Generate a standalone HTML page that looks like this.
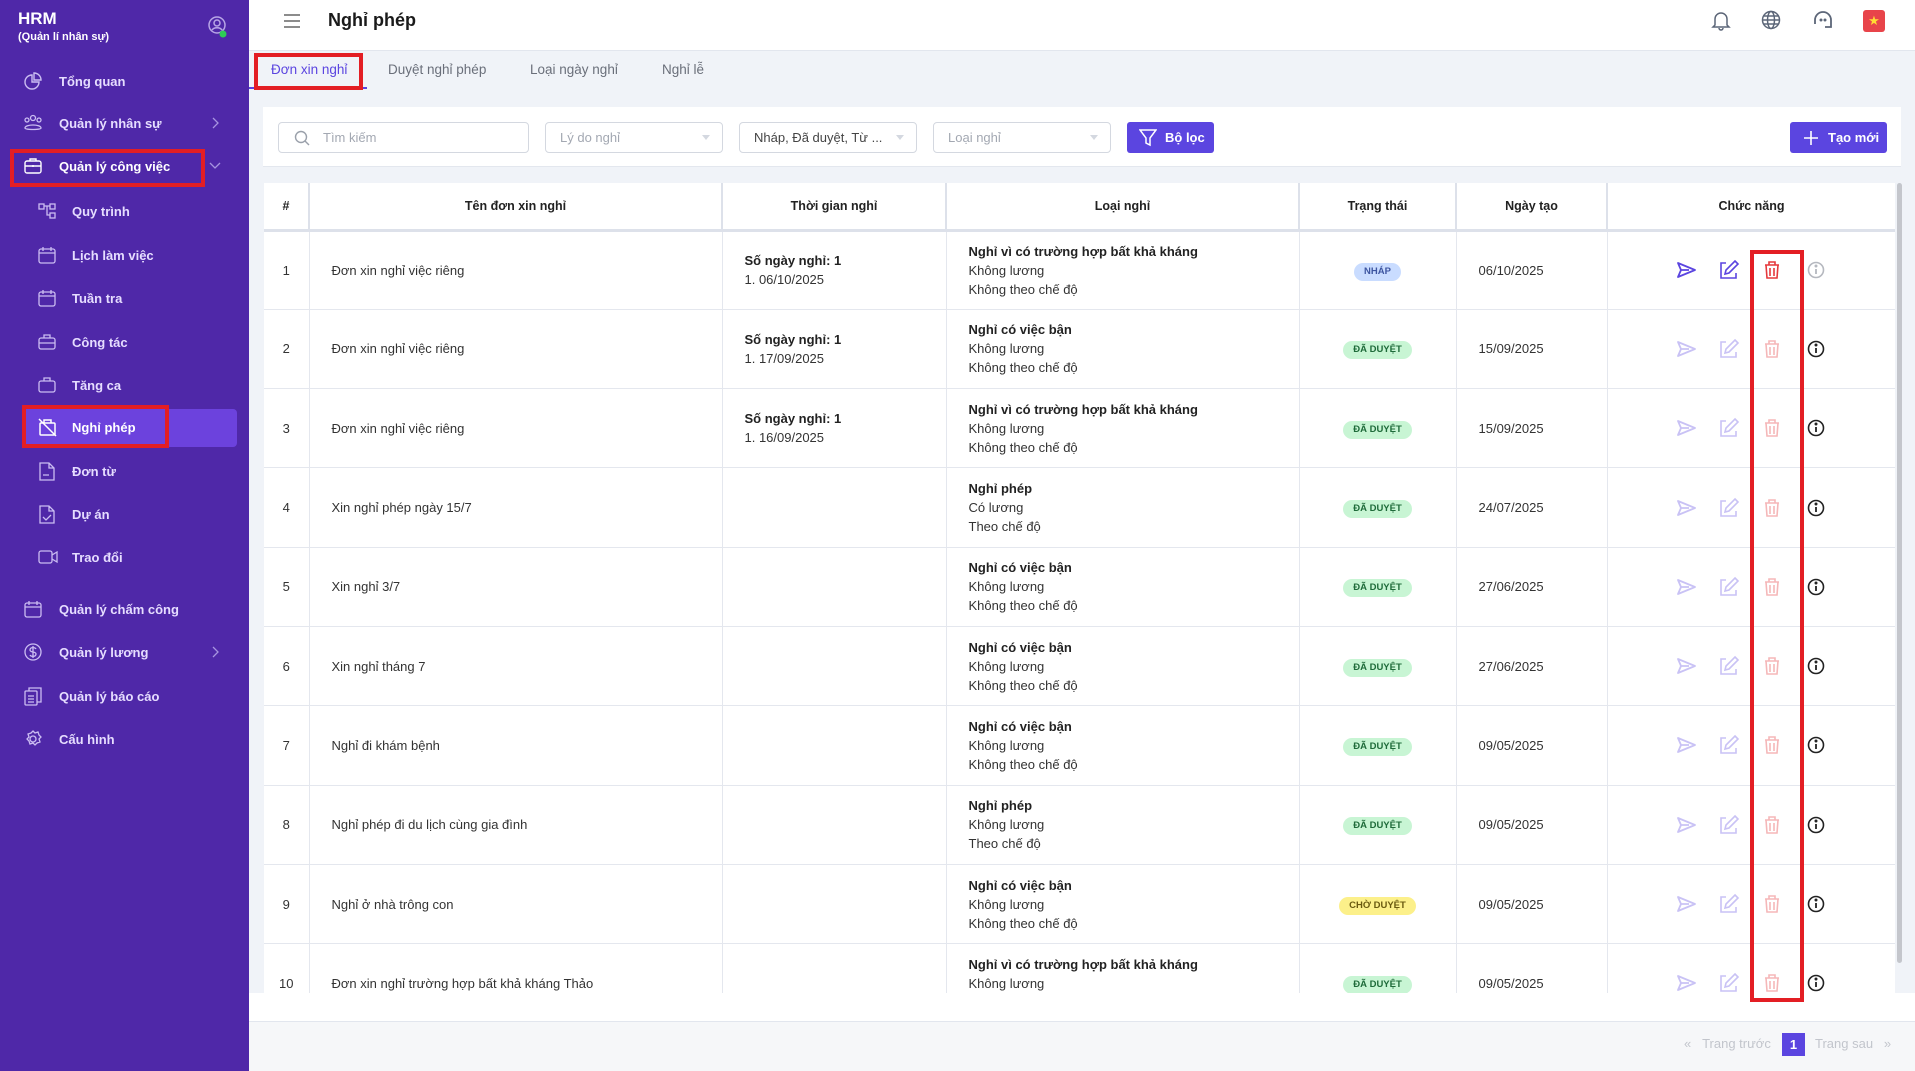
<!DOCTYPE html>
<html><head><meta charset="utf-8">
<style>
*{box-sizing:border-box;margin:0;padding:0}
body{width:1915px;height:1071px;overflow:hidden;font-family:"Liberation Sans","DejaVu Sans",sans-serif;background:#f0f3f8;position:relative;color:#222}
.sb{position:absolute;left:0;top:0;width:249px;height:1071px;background:#4f28a8;color:#fff}
.sb .it{position:absolute;left:0;width:249px;height:36px;display:flex;align-items:center;font-size:13px;font-weight:bold;color:#e6ddff}
.sb .it svg{position:absolute}
.sb .it span{position:absolute}
.top{position:absolute;left:249px;top:0;right:0;height:51px;background:#fff;border-bottom:1px solid #e2e6ee}
.tabs{position:absolute;left:249px;top:51px;right:0;height:40px;background:#f0f3f8}
.tab{position:absolute;top:0;height:38px;line-height:38px;font-size:13.5px;color:#6a6f7a}
.card{position:absolute;left:263px;top:107px;width:1638px;height:60px;background:#fff;border-bottom:1px solid #e3e7ee}
.inp{position:absolute;top:15px;height:31px;border:1px solid #d4d8e0;border-radius:4px;font-size:13px;color:#a3a8b2;line-height:29px;padding-left:14px;background:#fff}
.inp .ar{position:absolute;right:12px;top:12px;width:0;height:0;border-left:4px solid transparent;border-right:4px solid transparent;border-top:5px solid #d4d8e0}
.btn{position:absolute;top:15px;height:31px;background:#5b45e0;border-radius:3px;color:#fff;font-size:13px;font-weight:bold;line-height:31px}
table{position:absolute;left:264px;top:183px;width:1631px;border-collapse:collapse;table-layout:fixed;background:#fff}
th{height:47px;font-size:12.5px;font-weight:bold;color:#222;border-right:2px solid #dde1ea;border-bottom:3px solid #dde1ea;text-align:center}
td{height:79.3px;font-size:13px;color:#333;border-right:1px solid #e4e7ee;border-bottom:1px solid #e4e7ee;vertical-align:middle;line-height:19px}
td.c{text-align:center}
td.p{padding-left:22px}
b{font-weight:bold;color:#222}
.bd{display:inline-block;height:18px;line-height:18px;border-radius:9px;font-size:9.5px;font-weight:bold;padding:0 10px}
.ok{background:#c8f5d4;color:#1f6b3a}
.dr{background:#c9dcff;color:#3d55a0}
.wt{background:#fcf08a;color:#6a5a10}
.acts{position:relative;height:20px}
.acts svg{position:absolute;top:0}
.wrap{position:absolute;left:264px;top:183px;width:1631px;height:810px;overflow:hidden}
.wrap table{position:static}
.foot{position:absolute;left:249px;top:1021px;right:0;height:50px;background:#f6f7f9;border-top:1px solid #e2e6ee}
.red{position:absolute;border:4px solid #e31e24}
</style></head><body>

<div class="sb">
 <div style="position:absolute;left:18px;top:9px;font-size:17px;font-weight:bold">HRM</div>
 <div style="position:absolute;left:18px;top:31px;font-size:11px;font-weight:bold">(Quản lí nhân sự)</div>
 <svg style="position:absolute;left:207px;top:15px" width="22" height="24" viewBox="0 0 22 24"><circle cx="10" cy="10" r="8" fill="none" stroke="#b8a6e6" stroke-width="1.5"/><circle cx="10" cy="8" r="3" fill="none" stroke="#b8a6e6" stroke-width="1.5"/><path d="M5 15c2-3 8-3 10 0" fill="none" stroke="#b8a6e6" stroke-width="1.5"/><circle cx="16" cy="19" r="3.5" fill="#2ecc55"/></svg>

 <div style="position:absolute;left:22px;top:409px;width:215px;height:38px;background:#6c42dd;border-radius:4px"></div>

 <div class="it" style="top:63px"><svg style="left:24px" width="18" height="18" viewBox="0 0 18 18" fill="none" stroke="#cbbdf2" stroke-width="1.4"><path d="M8 3a7 7 0 1 0 7 7H8z"/><path d="M10 1a7 7 0 0 1 7 7h-7z"/></svg><span style="left:59px">Tổng quan</span></div>
 <div class="it" style="top:105px"><svg style="left:23px" width="20" height="18" viewBox="0 0 20 18" fill="none" stroke="#cbbdf2" stroke-width="1.3"><circle cx="10" cy="4" r="2.5"/><circle cx="4" cy="6" r="2"/><circle cx="16" cy="6" r="2"/><path d="M2 14c0-4 16-4 16 0c0 2-16 2-16 0z"/></svg><span style="left:59px">Quản lý nhân sự</span><svg style="left:211px" width="8" height="12" viewBox="0 0 8 12"><path d="M2 1l5 5-5 5" fill="none" stroke="#a794e0" stroke-width="1.3"/></svg></div>
 <div class="it" style="top:148px;color:#fff"><svg style="left:23px" width="20" height="18" viewBox="0 0 20 18" fill="none" stroke="#fff" stroke-width="1.4"><rect x="2" y="4" width="16" height="12" rx="2"/><path d="M7 4V2h6v2M2 9h16M10 8v2"/></svg><span style="left:59px">Quản lý công việc</span><svg style="left:209px" width="12" height="8" viewBox="0 0 12 8"><path d="M1 1l5 5 5-5" fill="none" stroke="#a794e0" stroke-width="1.3"/></svg></div>
 <div class="it" style="top:193px"><svg style="left:38px" width="19" height="18" viewBox="0 0 19 18" fill="none" stroke="#cbbdf2" stroke-width="1.3"><rect x="1" y="2" width="5" height="5"/><rect x="12" y="2" width="5" height="5"/><rect x="12" y="11" width="5" height="5"/><path d="M6 4h6M9 4v9h3"/></svg><span style="left:72px">Quy trình</span></div>
 <div class="it" style="top:237px"><svg style="left:38px" width="18" height="18" viewBox="0 0 18 18" fill="none" stroke="#cbbdf2" stroke-width="1.3"><rect x="1" y="3" width="16" height="14" rx="2"/><path d="M1 7h16M5 1v4M13 1v4"/></svg><span style="left:72px">Lịch làm việc</span></div>
 <div class="it" style="top:280px"><svg style="left:38px" width="18" height="18" viewBox="0 0 18 18" fill="none" stroke="#cbbdf2" stroke-width="1.3"><rect x="1" y="3" width="16" height="14" rx="2"/><path d="M1 7h16M5 1v4M13 1v4"/></svg><span style="left:72px">Tuần tra</span></div>
 <div class="it" style="top:324px"><svg style="left:38px" width="18" height="18" viewBox="0 0 18 18" fill="none" stroke="#cbbdf2" stroke-width="1.3"><rect x="1" y="5" width="16" height="11" rx="2"/><path d="M6 5V2h6v3M1 10h16"/></svg><span style="left:72px">Công tác</span></div>
 <div class="it" style="top:367px"><svg style="left:38px" width="18" height="18" viewBox="0 0 18 18" fill="none" stroke="#cbbdf2" stroke-width="1.3"><rect x="1" y="5" width="16" height="11" rx="2"/><path d="M6 5V2h6v3"/></svg><span style="left:72px">Tăng ca</span></div>
 <div class="it" style="top:409px;color:#fff"><svg style="left:38px" width="19" height="19" viewBox="0 0 19 19" fill="none" stroke="#fff" stroke-width="1.5"><rect x="2" y="5" width="15" height="12" rx="1"/><path d="M6 5V2h7v3M1 1l17 17"/></svg><span style="left:72px">Nghỉ phép</span></div>
 <div class="it" style="top:453px"><svg style="left:39px" width="16" height="19" viewBox="0 0 16 19" fill="none" stroke="#cbbdf2" stroke-width="1.3"><path d="M1 1h9l5 5v12H1z M10 1v5h5M4 13h6"/></svg><span style="left:72px">Đơn từ</span></div>
 <div class="it" style="top:496px"><svg style="left:39px" width="16" height="19" viewBox="0 0 16 19" fill="none" stroke="#cbbdf2" stroke-width="1.3"><path d="M1 1h9l5 5v12H1z M10 1v5h5M4 12l3 3 5-5"/></svg><span style="left:72px">Dự án</span></div>
 <div class="it" style="top:539px"><svg style="left:38px" width="20" height="16" viewBox="0 0 20 16" fill="none" stroke="#cbbdf2" stroke-width="1.3"><rect x="1" y="2" width="13" height="12" rx="2"/><path d="M14 6l5-3v10l-5-3"/></svg><span style="left:72px">Trao đổi</span></div>
 <div class="it" style="top:591px"><svg style="left:24px" width="18" height="18" viewBox="0 0 18 18" fill="none" stroke="#cbbdf2" stroke-width="1.3"><rect x="1" y="3" width="16" height="14" rx="2"/><path d="M1 7h16M5 1v4M13 1v4"/></svg><span style="left:59px">Quản lý chấm công</span></div>
 <div class="it" style="top:634px"><svg style="left:24px" width="18" height="18" viewBox="0 0 18 18" fill="none" stroke="#cbbdf2" stroke-width="1.3"><circle cx="9" cy="9" r="8"/><path d="M12 6c-1-2-6-2-6 1s6 1 6 4-5 3-6 1M9 3v12"/></svg><span style="left:59px">Quản lý lương</span><svg style="left:211px" width="8" height="12" viewBox="0 0 8 12"><path d="M2 1l5 5-5 5" fill="none" stroke="#a794e0" stroke-width="1.3"/></svg></div>
 <div class="it" style="top:678px"><svg style="left:24px" width="18" height="19" viewBox="0 0 18 19" fill="none" stroke="#cbbdf2" stroke-width="1.3"><rect x="1" y="4" width="12" height="14" rx="1"/><path d="M5 4V1h12v14h-4M4 9h6M4 12h6M4 15h6"/></svg><span style="left:59px">Quản lý báo cáo</span></div>
 <div class="it" style="top:721px"><svg style="left:24px" width="18" height="18" viewBox="0 0 18 18" fill="none" stroke="#cbbdf2" stroke-width="1.3"><circle cx="9" cy="9" r="3"/><path d="M9 1l2 2 3-1 1 3 2 2-2 2 1 3-3 1-2 2-2-2-3 1-1-3-2-2 2-2-1-3 3-1z"/></svg><span style="left:59px">Cấu hình</span></div>
</div>
<div class="red" style="left:10px;top:149px;width:195px;height:38px"></div>
<div class="red" style="left:22px;top:405px;width:147px;height:43px"></div>

<div class="top">
 <svg style="position:absolute;left:34px;top:14px" width="18" height="14" viewBox="0 0 18 14"><path d="M1 1h16M1 7h16M1 13h16" stroke="#666" stroke-width="1.5"/></svg>
 <div style="position:absolute;left:79px;top:10px;font-size:18px;font-weight:bold;color:#1a1a1a">Nghỉ phép</div>
 <svg style="position:absolute;left:1462px;top:10px" width="20" height="22" viewBox="0 0 20 22" fill="none" stroke="#5c6678" stroke-width="1.5"><path d="M4 15V9a6 6 0 0 1 12 0v6l2 2H2z"/><path d="M8 18a2 2 0 0 0 4 0"/></svg>
 <svg style="position:absolute;left:1512px;top:10px" width="20" height="20" viewBox="0 0 20 20" fill="none" stroke="#5c6678" stroke-width="1.5"><circle cx="10" cy="10" r="8.5"/><ellipse cx="10" cy="10" rx="3.5" ry="8.5"/><path d="M1.5 10h17M3 6h14M3 14h14"/></svg>
 <svg style="position:absolute;left:1563px;top:10px" width="22" height="20" viewBox="0 0 22 20" fill="none" stroke="#5c6678" stroke-width="1.8"><path d="M3 14V10a8 8 0 0 1 16 0v4"/><path d="M19 14v3h-6"/><circle cx="9" cy="10" r=".6" fill="#5c6678"/><circle cx="13" cy="10" r=".6" fill="#5c6678"/></svg>
 <div style="position:absolute;left:1614px;top:10px;width:22px;height:22px;background:#e8444a;border-radius:3px;color:#ffdd33;font-size:13px;text-align:center;line-height:22px">★</div>
</div>

<div class="tabs">
 <div class="tab" style="left:0;width:118px;border-bottom:2px solid #5b45e0"></div>
 <div class="tab" style="left:22px;color:#5b45e0">Đơn xin nghỉ</div>
 <div class="tab" style="left:139px">Duyệt nghỉ phép</div>
 <div class="tab" style="left:281px">Loại ngày nghỉ</div>
 <div class="tab" style="left:413px">Nghỉ lễ</div>
</div>
<div class="red" style="left:254px;top:53px;width:109px;height:37px"></div>

<div class="card">
 <div class="inp" style="left:15px;width:251px;padding-left:44px">Tìm kiếm<svg style="position:absolute;left:15px;top:7px" width="16" height="16" viewBox="0 0 16 16" fill="none" stroke="#9aa0aa" stroke-width="1.4"><circle cx="7" cy="7" r="5.5"/><path d="M11 11l4 4"/></svg></div>
 <div class="inp" style="left:282px;width:178px">Lý do nghỉ<div class="ar"></div></div>
 <div class="inp" style="left:476px;width:178px;color:#444">Nháp, Đã duyệt, Từ ...<div class="ar"></div></div>
 <div class="inp" style="left:670px;width:178px">Loại nghỉ<div class="ar"></div></div>
 <div class="btn" style="left:864px;width:87px;padding-left:38px">Bộ lọc<svg style="position:absolute;left:12px;top:7px" width="18" height="18" viewBox="0 0 18 18" fill="none" stroke="#fff" stroke-width="1.5"><path d="M1 1h16l-6 8v7l-4-2V9z"/></svg></div>
 <div class="btn" style="left:1527px;width:97px;padding-left:38px">Tạo mới<svg style="position:absolute;left:13px;top:8px" width="16" height="16" viewBox="0 0 16 16" stroke="#fff" stroke-width="1.6"><path d="M8 1v14M1 8h14"/></svg></div>
</div>

<div class="wrap">
<table>
<colgroup><col style="width:45px"><col style="width:413px"><col style="width:224px"><col style="width:353px"><col style="width:157px"><col style="width:151px"><col style="width:288px"></colgroup>
<tr><th>#</th><th>Tên đơn xin nghỉ</th><th>Thời gian nghỉ</th><th>Loại nghỉ</th><th>Trạng thái</th><th>Ngày tạo</th><th style="border-right:none">Chức năng</th></tr>
<!--ROWS-->
<tr><td class="c">1</td><td class="p">Đơn xin nghỉ việc riêng</td><td class="p"><b>Số ngày nghỉ: 1</b><br>1. 06/10/2025</td><td class="p"><b>Nghỉ vì có trường hợp bất khả kháng</b><br>Không lương<br>Không theo chế độ</td><td class="c"><span class="bd dr">NHÁP</span></td><td class="p">06/10/2025</td><td style="border-right:none"><div class="acts" id="a1"></div></td></tr>
<tr><td class="c">2</td><td class="p">Đơn xin nghỉ việc riêng</td><td class="p"><b>Số ngày nghỉ: 1</b><br>1. 17/09/2025</td><td class="p"><b>Nghỉ có việc bận</b><br>Không lương<br>Không theo chế độ</td><td class="c"><span class="bd ok">ĐÃ DUYỆT</span></td><td class="p">15/09/2025</td><td style="border-right:none"><div class="acts"></div></td></tr>
<tr><td class="c">3</td><td class="p">Đơn xin nghỉ việc riêng</td><td class="p"><b>Số ngày nghỉ: 1</b><br>1. 16/09/2025</td><td class="p"><b>Nghỉ vì có trường hợp bất khả kháng</b><br>Không lương<br>Không theo chế độ</td><td class="c"><span class="bd ok">ĐÃ DUYỆT</span></td><td class="p">15/09/2025</td><td style="border-right:none"><div class="acts"></div></td></tr>
<tr><td class="c">4</td><td class="p">Xin nghỉ phép ngày 15/7</td><td></td><td class="p"><b>Nghỉ phép</b><br>Có lương<br>Theo chế độ</td><td class="c"><span class="bd ok">ĐÃ DUYỆT</span></td><td class="p">24/07/2025</td><td style="border-right:none"><div class="acts"></div></td></tr>
<tr><td class="c">5</td><td class="p">Xin nghỉ 3/7</td><td></td><td class="p"><b>Nghỉ có việc bận</b><br>Không lương<br>Không theo chế độ</td><td class="c"><span class="bd ok">ĐÃ DUYỆT</span></td><td class="p">27/06/2025</td><td style="border-right:none"><div class="acts"></div></td></tr>
<tr><td class="c">6</td><td class="p">Xin nghỉ tháng 7</td><td></td><td class="p"><b>Nghỉ có việc bận</b><br>Không lương<br>Không theo chế độ</td><td class="c"><span class="bd ok">ĐÃ DUYỆT</span></td><td class="p">27/06/2025</td><td style="border-right:none"><div class="acts"></div></td></tr>
<tr><td class="c">7</td><td class="p">Nghỉ đi khám bệnh</td><td></td><td class="p"><b>Nghỉ có việc bận</b><br>Không lương<br>Không theo chế độ</td><td class="c"><span class="bd ok">ĐÃ DUYỆT</span></td><td class="p">09/05/2025</td><td style="border-right:none"><div class="acts"></div></td></tr>
<tr><td class="c">8</td><td class="p">Nghỉ phép đi du lịch cùng gia đình</td><td></td><td class="p"><b>Nghỉ phép</b><br>Không lương<br>Theo chế độ</td><td class="c"><span class="bd ok">ĐÃ DUYỆT</span></td><td class="p">09/05/2025</td><td style="border-right:none"><div class="acts"></div></td></tr>
<tr><td class="c">9</td><td class="p">Nghỉ ở nhà trông con</td><td></td><td class="p"><b>Nghỉ có việc bận</b><br>Không lương<br>Không theo chế độ</td><td class="c"><span class="bd wt">CHỜ DUYỆT</span></td><td class="p">09/05/2025</td><td style="border-right:none"><div class="acts"></div></td></tr>
<tr><td class="c">10</td><td class="p">Đơn xin nghỉ trường hợp bất khả kháng Thảo</td><td></td><td class="p"><b>Nghỉ vì có trường hợp bất khả kháng</b><br>Không lương<br>Không theo chế độ</td><td class="c"><span class="bd ok">ĐÃ DUYỆT</span></td><td class="p">09/05/2025</td><td style="border-right:none"><div class="acts"></div></td></tr>
</table>
</div>
<div style="position:absolute;left:1897px;top:183px;width:5px;height:780px;background:#c4c6cc;border-radius:3px"></div>

<svg style="position:absolute;left:0;top:0;pointer-events:none" width="1915" height="1071">
 <defs>
  <g id="send"><path d="M-8-7L9 0-8 7-5 0zM-5 0H3" fill="none" stroke-width="1.8" stroke-linejoin="round"/></g>
  <g id="edit"><path d="M-3-7H-8V8H7V3" fill="none" stroke-width="1.6"/><path d="M6-9L9-6 0 3-4 4-3 0z" fill="none" stroke-width="1.6"/></g>
  <g id="trash"><path d="M-7-5H7M-3-5v-3h6v3M-6-5l1 13h10l1-13M-2-2v8M2-2v8" fill="none" stroke-width="1.6"/></g>
  <g id="info"><circle r="7.5" fill="none" stroke-width="1.6"/><path d="M0-1v5" stroke-width="1.8"/><circle cy="-4" r="1"/></g>
 </defs>
 <g transform="translate(0,270)">
  <use href="#send" x="1686" stroke="#5b45e0" fill="#5b45e0"/>
  <use href="#edit" x="1729" stroke="#5b45e0"/>
  <use href="#trash" x="1772" stroke="#e5393c"/>
  <use href="#info" x="1816" stroke="#b5b8bf" fill="#b5b8bf"/>
 </g>
 <g id="r2">
  <g transform="translate(0,349)"><use href="#send" x="1686" stroke="#c9c2f5"/><use href="#edit" x="1729" stroke="#c9c2f5"/><use href="#trash" x="1772" stroke="#f5b7b8"/><use href="#info" x="1816" stroke="#222" fill="#222"/></g>
  <g transform="translate(0,428)"><use href="#send" x="1686" stroke="#c9c2f5"/><use href="#edit" x="1729" stroke="#c9c2f5"/><use href="#trash" x="1772" stroke="#f5b7b8"/><use href="#info" x="1816" stroke="#222" fill="#222"/></g>
  <g transform="translate(0,508)"><use href="#send" x="1686" stroke="#c9c2f5"/><use href="#edit" x="1729" stroke="#c9c2f5"/><use href="#trash" x="1772" stroke="#f5b7b8"/><use href="#info" x="1816" stroke="#222" fill="#222"/></g>
  <g transform="translate(0,587)"><use href="#send" x="1686" stroke="#c9c2f5"/><use href="#edit" x="1729" stroke="#c9c2f5"/><use href="#trash" x="1772" stroke="#f5b7b8"/><use href="#info" x="1816" stroke="#222" fill="#222"/></g>
  <g transform="translate(0,666)"><use href="#send" x="1686" stroke="#c9c2f5"/><use href="#edit" x="1729" stroke="#c9c2f5"/><use href="#trash" x="1772" stroke="#f5b7b8"/><use href="#info" x="1816" stroke="#222" fill="#222"/></g>
  <g transform="translate(0,745)"><use href="#send" x="1686" stroke="#c9c2f5"/><use href="#edit" x="1729" stroke="#c9c2f5"/><use href="#trash" x="1772" stroke="#f5b7b8"/><use href="#info" x="1816" stroke="#222" fill="#222"/></g>
  <g transform="translate(0,825)"><use href="#send" x="1686" stroke="#c9c2f5"/><use href="#edit" x="1729" stroke="#c9c2f5"/><use href="#trash" x="1772" stroke="#f5b7b8"/><use href="#info" x="1816" stroke="#222" fill="#222"/></g>
  <g transform="translate(0,904)"><use href="#send" x="1686" stroke="#c9c2f5"/><use href="#edit" x="1729" stroke="#c9c2f5"/><use href="#trash" x="1772" stroke="#f5b7b8"/><use href="#info" x="1816" stroke="#222" fill="#222"/></g>
  <g transform="translate(0,983)"><use href="#send" x="1686" stroke="#c9c2f5"/><use href="#edit" x="1729" stroke="#c9c2f5"/><use href="#trash" x="1772" stroke="#f5b7b8"/><use href="#info" x="1816" stroke="#222" fill="#222"/></g>
 </g>
</svg>

<div style="position:absolute;left:249px;top:993px;right:0;height:28px;background:#fff"></div>
<div class="foot">
 <div style="position:absolute;left:1435px;top:14px;font-size:13px;color:#c2c5cc">«&nbsp;&nbsp;&nbsp;Trang trước</div>
 <div style="position:absolute;left:1533px;top:11px;width:23px;height:23px;background:#5b45e0;color:#fff;font-size:13px;font-weight:bold;text-align:center;line-height:23px">1</div>
 <div style="position:absolute;left:1566px;top:14px;font-size:13px;color:#c2c5cc">Trang sau&nbsp;&nbsp;&nbsp;»</div>
</div>
<div class="red" style="left:1750px;top:250px;width:54px;height:752px"></div>
</body></html>
